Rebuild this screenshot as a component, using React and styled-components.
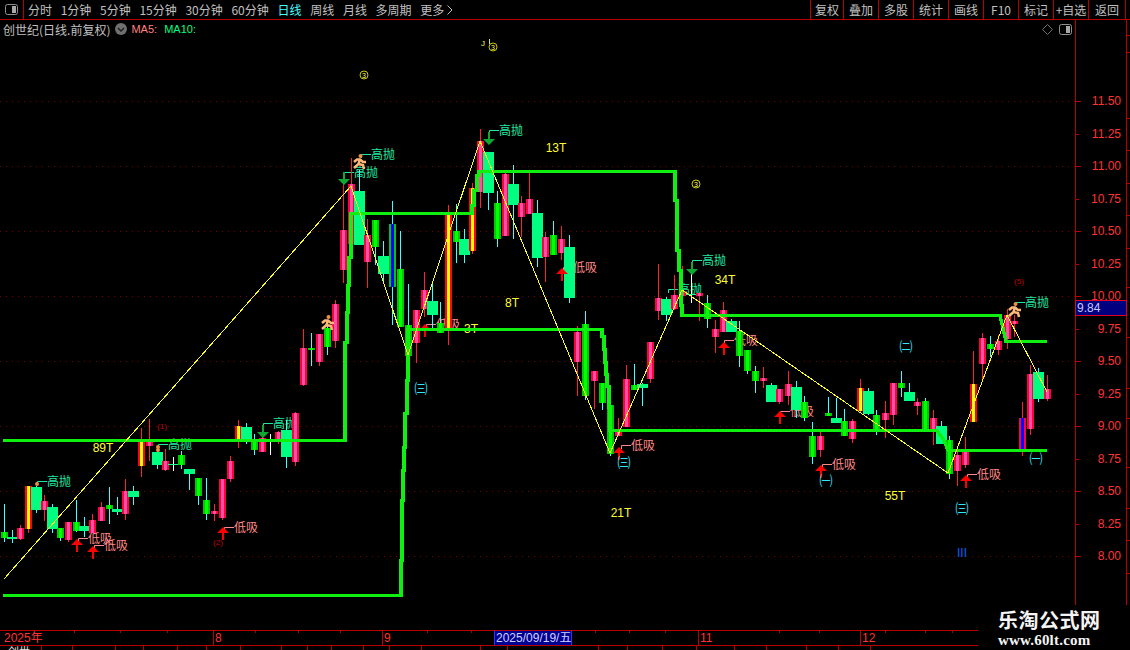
import React from 'react';
import styled, { createGlobalStyle } from 'styled-components';

const LINE_RED = '#b80000';
const CJK = '"Noto Sans CJK SC", "Liberation Sans", sans-serif';

const GlobalStyle = createGlobalStyle`
  html, body { margin: 0; padding: 0; background: #000; }
`;

const Page = styled.div`
  position: relative;
  width: 1130px;
  height: 650px;
  background: #000;
  overflow: hidden;
  display: flex;
  flex-direction: column;
  font-family: ${CJK};
  font-size: 12px;
  color: #c0c0c0;
`;

const Toolbar = styled.div`
  height: 19px;
  flex: none;
  display: flex;
  align-items: center;
  border-bottom: 1px solid ${LINE_RED};
`;

const PanelToggle = styled.div`
  width: 23px;
  height: 19px;
  display: flex;
  align-items: center;
  justify-content: center;
  border-right: 1px solid ${LINE_RED};
`;

const Periods = styled.div`
  display: flex;
  align-items: center;
  gap: 8.7px;
  margin-left: 4px;
`;

const Period = styled.span`
  display: flex;
  align-items: center;
  gap: 3px;
  line-height: 19px;
  white-space: nowrap;
  color: ${(p) => (p.$active ? '#40ffff' : '#c0c0c0')};
`;

const Actions = styled.div`
  margin-left: auto;
  display: flex;
  height: 19px;
  margin-right: 4px;
  border-right: 1px solid ${LINE_RED};
`;

const ActionButton = styled.div`
  width: ${(p) => p.$w}px;
  box-sizing: border-box;
  border-left: 1px solid ${LINE_RED};
  text-align: center;
  line-height: 19px;
  white-space: nowrap;
  overflow: hidden;
`;

const Main = styled.div`
  flex: none;
  height: 610px;
  display: flex;
`;

const ChartColumn = styled.div`
  width: 1075px;
  display: flex;
  flex-direction: column;
`;

const Legend = styled.div`
  height: 18px;
  flex: none;
  display: flex;
  align-items: center;
  padding-left: 3px;
`;

const StockName = styled.span`
  margin-right: 5px;
  white-space: nowrap;
`;

const MaLabel = styled.span`
  font-family: "Liberation Sans", sans-serif;
  font-size: 11px;
  margin-left: ${(p) => p.$gap}px;
  color: ${(p) => p.$color};
`;

const LegendTools = styled.div`
  margin-left: auto;
  margin-right: 3px;
  display: flex;
  align-items: center;
  gap: 6px;
`;

const ChartSvg = styled.svg`
  display: block;
  flex: none;
`;

const PriceAxisSvg = styled.svg`
  display: block;
  flex: none;
`;

const PriceText = styled.text`
  font-family: "Liberation Sans", sans-serif;
  font-size: 12px;
  fill: #ff3333;
  text-anchor: end;
  dominant-baseline: central;
`;

const LastPriceText = styled.text`
  font-family: "Liberation Sans", sans-serif;
  font-size: 12px;
  fill: #c8c8ff;
  dominant-baseline: central;
`;

const ChartText = styled.text`
  font-family: ${CJK};
  font-size: ${(p) => p.$size || 12}px;
  fill: ${(p) => p.$color};
  dominant-baseline: central;
`;

const LatinText = styled.text`
  font-family: "Liberation Sans", sans-serif;
  font-size: ${(p) => p.$size || 12}px;
  fill: ${(p) => p.$color};
  dominant-baseline: central;
  text-anchor: middle;
`;

const RoundText = styled.text`
  font-family: ${CJK};
  font-size: 13px;
  fill: #30e8ff;
  dominant-baseline: central;
  text-anchor: middle;
`;

const DateAxis = styled.div`
  position: relative;
  flex: none;
  height: 16px;
  display: flex;
  box-sizing: border-box;
  border-top: 1px solid ${LINE_RED};
  border-bottom: 1px solid ${LINE_RED};
  color: #ff3333;
`;

const MonthCell = styled.div`
  width: ${(p) => p.$w}px;
  flex: none;
  box-sizing: border-box;
  padding-left: ${(p) => (p.$first ? 4 : 1)}px;
  border-right: 1px solid ${(p) => (p.$open ? 'transparent' : LINE_RED)};
  line-height: 14px;
  font-family: "Liberation Sans", ${CJK};
  font-size: 12px;
  white-space: nowrap;
`;

const DateTick = styled.i`
  position: absolute;
  top: 0;
  width: 1px;
  height: 2px;
  background: ${LINE_RED};
`;

const DateTag = styled.div`
  position: absolute;
  left: 494px;
  top: 0;
  width: 78px;
  height: 14px;
  box-sizing: border-box;
  background: #000090;
  border-left: 1px solid #3030ff;
  border-right: 1px solid #3030ff;
  color: #d0d0ff;
  line-height: 14px;
  font-family: "Liberation Sans", ${CJK};
  font-size: 12px;
  white-space: nowrap;
  padding-left: 1px;
`;

const StatusStrip = styled.div`
  flex: none;
  height: 4px;
  display: flex;
  overflow: hidden;
`;

const StatusCell = styled.div`
  width: ${(p) => p.$w}px;
  flex: none;
  box-sizing: border-box;
  border-right: 1px solid ${LINE_RED};
  font-size: 11px;
  line-height: 11px;
  color: #e0e0e0;
  padding-left: 8px;
  white-space: nowrap;
  overflow: hidden;
`;

const Watermark = styled.div`
  position: absolute;
  right: 0;
  bottom: 0;
  width: 152px;
  height: 45px;
  background: #000;
  display: flex;
  flex-direction: column;
  padding-left: 20px;
  box-sizing: border-box;
`;

const WatermarkName = styled.div`
  font-family: ${CJK};
  font-weight: 700;
  font-size: 20px;
  line-height: 24px;
  margin-top: 3px;
  letter-spacing: 0.5px;
  color: #f4f4f4;
  white-space: nowrap;
`;

const WatermarkUrl = styled.div`
  font-family: "Liberation Serif", serif;
  font-weight: 700;
  font-size: 15px;
  line-height: 16px;
  letter-spacing: 0.2px;
  color: #f4f4f4;
  white-space: nowrap;
`;

// x, wick top, wick bottom, body top, body bottom, kind
const CANDLES = [
  [4, 504, 542, 532, 538, 'g'], [12, 530, 543, 537, 539, 'm'], [20, 525, 540, 528, 539, 'r'],
  [28, 486, 533, 486, 529, 'y'], [36, 486, 513, 487, 510, 'm'], [44, 495, 521, 501, 510, 'r'],
  [52, 504, 533, 507, 529, 'm'], [60, 528, 541, 528, 538, 'g'], [68, 522, 542, 522, 540, 'r'],
  [76, 500, 532, 522, 531, 'g'], [84, 517, 537, 526, 531, 'm'], [92, 514, 533, 520, 533, 'r'],
  [101, 502, 521, 507, 521, 'r'], [109, 487, 524, 505, 509, 'g'], [117, 497, 515, 509, 512, 'm'],
  [125, 479, 520, 491, 514, 'r'], [133, 486, 505, 491, 497, 'm'], [141, 428, 477, 442, 466, 'y'],
  [149, 419, 461, 442, 446, 'r'], [157, 447, 469, 452, 465, 'm'], [165, 449, 471, 461, 470, 'r'],
  [173, 457, 471, 464, 465, 'w'], [181, 451, 469, 455, 465, 'g'], [189, 469, 490, 469, 474, 'm'],
  [198, 478, 505, 478, 496, 'g'], [206, 478, 520, 500, 514, 'g'], [214, 504, 521, 511, 514, 'r'],
  [222, 479, 520, 479, 518, 'r'], [230, 456, 482, 461, 479, 'r'], [238, 420, 448, 426, 439, 'y'],
  [246, 423, 444, 427, 440, 'm'], [254, 434, 455, 441, 450, 'g'], [262, 428, 452, 438, 452, 'r'],
  [270, 434, 455, 440, 441, 'w'], [278, 431, 444, 432, 440, 'r'], [286, 420, 468, 430, 457, 'm'],
  [295, 412, 466, 413, 462, 'r'], [303, 329, 386, 348, 385, 'r'], [311, 333, 366, 348, 350, 'g'],
  [319, 334, 366, 334, 362, 'r'], [327, 322, 355, 328, 347, 'g'], [335, 300, 348, 304, 341, 'r'],
  [343, 183, 283, 230, 270, 'r'], [351, 158, 253, 184, 244, 'r'], [359, 170, 245, 191, 245, 'm'],
  [367, 219, 288, 235, 262, 'r'], [375, 220, 265, 220, 247, 'g'], [383, 241, 283, 256, 274, 'm'],
  [392, 201, 325, 224, 287, 'bg'], [400, 231, 327, 269, 327, 'g'], [408, 284, 356, 325, 356, 'g'],
  [416, 310, 363, 310, 343, 'r'], [424, 272, 317, 290, 309, 'r'], [432, 281, 328, 301, 315, 'm'],
  [440, 302, 333, 323, 333, 'g'], [448, 205, 345, 215, 329, 'y'], [456, 204, 263, 231, 242, 'g'],
  [464, 229, 263, 239, 255, 'm'], [472, 183, 254, 188, 251, 'y'], [480, 129, 208, 141, 192, 'r'],
  [488, 152, 210, 152, 193, 'm'], [497, 191, 247, 203, 239, 'g'], [505, 170, 236, 174, 236, 'r'],
  [513, 165, 239, 184, 205, 'm'], [521, 196, 237, 203, 217, 'r'], [529, 173, 214, 199, 214, 'r'],
  [537, 200, 267, 213, 258, 'm'], [545, 232, 282, 237, 257, 'r'], [553, 221, 255, 235, 255, 'g'],
  [561, 226, 260, 239, 253, 'r'], [569, 235, 303, 247, 298, 'm'], [577, 326, 396, 332, 362, 'r'],
  [585, 311, 400, 324, 396, 'g'], [594, 371, 409, 371, 381, 'r'], [602, 383, 410, 383, 403, 'g'],
  [610, 405, 456, 405, 454, 'g'], [618, 418, 436, 430, 436, 'r'], [626, 365, 427, 379, 427, 'r'],
  [634, 364, 390, 385, 390, 'g'], [642, 383, 406, 384, 388, 'm'], [650, 342, 383, 342, 379, 'r'],
  [658, 264, 320, 298, 311, 'r'], [666, 297, 321, 299, 315, 'm'], [674, 275, 310, 295, 309, 'r'],
  [682, 266, 310, 291, 296, 'r'], [691, 273, 303, 294, 295, 'w'], [699, 293, 321, 293, 296, 'r'],
  [707, 295, 328, 303, 319, 'g'], [715, 320, 353, 329, 337, 'r'], [723, 302, 332, 310, 332, 'r'],
  [731, 319, 332, 321, 332, 'm'], [739, 321, 367, 331, 356, 'g'], [747, 350, 374, 350, 371, 'g'],
  [755, 366, 393, 371, 381, 'g'], [763, 367, 388, 378, 381, 'r'], [771, 383, 402, 385, 402, 'm'],
  [779, 389, 404, 389, 402, 'r'], [788, 371, 405, 384, 396, 'r'], [796, 381, 418, 387, 410, 'm'],
  [804, 396, 421, 402, 418, 'g'], [812, 422, 464, 436, 457, 'g'], [820, 432, 457, 436, 450, 'r'],
  [828, 397, 416, 413, 416, 'g'], [836, 398, 423, 418, 423, 'm'], [844, 409, 436, 421, 436, 'g'],
  [852, 419, 443, 421, 439, 'r'], [860, 379, 412, 388, 411, 'y'], [868, 388, 415, 391, 414, 'm'],
  [876, 410, 435, 415, 430, 'g'], [885, 401, 438, 413, 420, 'r'], [893, 383, 425, 383, 415, 'r'],
  [901, 371, 397, 383, 388, 'g'], [909, 383, 401, 392, 401, 'm'], [917, 398, 415, 402, 406, 'r'],
  [925, 398, 430, 401, 429, 'g'], [933, 410, 445, 418, 429, 'r'], [941, 421, 444, 426, 444, 'm'],
  [949, 436, 479, 440, 474, 'g'], [957, 449, 486, 455, 471, 'r'], [965, 437, 468, 452, 465, 'r'],
  [973, 351, 422, 384, 422, 'y'], [982, 333, 379, 338, 364, 'r'], [990, 336, 357, 344, 349, 'g'],
  [998, 335, 355, 341, 350, 'r'], [1007, 309, 349, 315, 339, 'r'], [1014, 315, 337, 321, 324, 'r'],
  [1022, 402, 456, 418, 450, 'br'], [1030, 365, 435, 374, 429, 'r'], [1038, 368, 402, 372, 399, 'm'],
  [1047, 375, 401, 389, 399, 'r'],
];

const CANDLE_STYLE = {
  r: { w: 7, wick: '#ff2030', edge: '#ff0040', core: '#ff50a8' },
  y: { w: 7, wick: '#ff2030', edge: '#ff0020', core: '#ffff00' },
  g: { w: 7, wick: '#40ffff', edge: '#00c800', core: '#00ff00' },
  m: { w: 11, wick: '#40ffff', edge: '#00ff80', core: '#00ff80' },
  w: { w: 11, wick: '#ffffff', edge: '#20ff90', core: '#20ff90' },
  bg: { w: 7, wick: '#40ffff', edge: '#00c800', core: '#0000ff' },
  br: { w: 7, wick: '#ff2030', edge: '#ff0040', core: '#0000ff' },
};

const TREND_LINES = [
  '3,440 345,440 345,342 347,342 347,312 348,312 348,285 349,285 349,257 351,257 351,213 472,213 472,205 474,205 474,190 477,190 477,175 479,175 479,171 675,171 675,200 677,200 677,250 679,250 679,270 681,270 681,305 682,305 682,315 1000,315 1006,341 1047,341',
  '3,595 401,595 401,560 402,560 402,500 403,500 403,470 404,470 404,447 405,447 405,413 407,413 407,380 408,380 408,329 602,329 602,336 604,336 604,349 605,349 605,362 606,362 606,374 607,374 607,386 609,386 609,407 610,407 610,430 937,430 944,440 948,450 1047,450',
];
const ZIGZAG = '4,579 351,186 408,355 480,141 610,453 682,290 948,473 1007,315 1047,392';

const SELL_LABELS = [[47, 480], [168, 443], [273, 422], [371, 153], [354, 171], [499, 129], [702, 259], [678, 288], [1025, 301]];
const BUY_LABELS = [[88, 537], [104, 544], [234, 526], [573, 266], [436, 323], [631, 444], [734, 339], [790, 410], [832, 463], [977, 473]];
const UP_ARROWS = [[77, 539], [93, 546], [223, 527], [562, 268], [425, 324], [619, 447], [724, 342], [780, 411], [821, 465], [966, 475]];
const DOWN_ARROWS = [[263, 425], [344, 172], [489, 132], [692, 262]];
const RUNNERS = [[353, 154], [321, 315], [1008, 302]];
const SPARKS = [[37, 484], [158, 447], [158, 450]];
const WAVE_T = [['89T', 103, 448], ['13T', 556, 148], ['8T', 512, 303], ['3T', 471, 329], ['34T', 725, 280], ['21T', 621, 513], ['55T', 895, 496]];
const ROUND_MARKS = [['㈢', 421, 387], ['㈢', 624, 461], ['㈠', 826, 479], ['㈡', 906, 345], ['㈢', 962, 507], ['㈠', 1036, 457]];
const YELLOW_MARKS = [[364, 75], [493, 47], [696, 184]];
const WAVE_NO = [['(1)', 162, 426], ['(2)', 218, 542], ['(5)', 1019, 281]];

const GRID_Y = [101, 166, 231, 296, 361, 426, 491, 556];
const PRICES = [
  ['11.50', 101], ['11.25', 134], ['11.00', 166], ['10.75', 199], ['10.50', 231], ['10.25', 264], ['10.00', 296],
  ['9.75', 329], ['9.50', 361], ['9.25', 394], ['9.00', 426], ['8.75', 459], ['8.50', 491], ['8.25', 524], ['8.00', 556],
];
const SIDE_TICKS = [35, 52, 118, 150, 183, 215, 248, 287, 337, 388, 418, 467, 508, 540, 573];

const PERIODS = ['分时', '1分钟', '5分钟', '15分钟', '30分钟', '60分钟', '日线', '周线', '月线', '多周期', '更多'];
const ACTIONS = [['复权', 33], ['叠加', 35], ['多股', 35], ['统计', 35], ['画线', 35], ['F10', 35], ['标记', 35], ['+自选', 35], ['返回', 37]];
const MONTHS = [['2025年', 214], ['8', 169], ['9', 316], ['11', 162], ['12', 269]];
const DATE_TICKS = [74, 120, 167, 255, 298, 340, 427, 471, 595, 629, 665, 779, 819, 885, 925, 952];
const STATUS_WIDTHS = [42, 31, 43, 28, 34, 29, 34, 41, 26, 24, 32, 26, 32, 59, 27, 91, 29, 35, 34, 38, 32, 40, 32, 32];

const SplitIcon = () => (
  <svg width="13" height="11" viewBox="0 0 13 11">
    <rect x="0.5" y="0.5" width="12" height="10" rx="2" fill="none" stroke="#909090" />
    <rect x="7" y="2" width="4" height="7" fill="#a8a8a8" />
  </svg>
);

const ChevronBadge = () => (
  <svg width="12" height="12" viewBox="0 0 12 12">
    <circle cx="6" cy="6" r="6" fill="#707070" />
    <path d="M3 5 L6 8 L9 5" fill="none" stroke="#1c1c1c" strokeWidth="1.4" />
  </svg>
);

const DiamondIcon = () => (
  <svg width="11" height="11" viewBox="0 0 11 11">
    <path d="M5.5 0.5 L10.5 5.5 L5.5 10.5 L0.5 5.5 Z" fill="none" stroke="#707070" />
  </svg>
);

const MoreChevron = () => (
  <svg width="6" height="10" viewBox="0 0 6 10">
    <path d="M0.5 0.5 L5 5 L0.5 9.5" fill="none" stroke="#c0c0c0" />
  </svg>
);

const Candle = ({ c }) => {
  const [x, wt, wb, bt, bb, kind] = c;
  const s = CANDLE_STYLE[kind];
  const h = Math.max(bb - bt, 1);
  return (
    <g>
      <rect x={x} y={wt} width="1" height={wb - wt} fill={s.wick} />
      <rect x={x - (s.w - 1) / 2} y={bt} width={s.w} height={h} fill={s.edge} />
      {s.w === 7 && <rect x={x - 1} y={bt} width="3" height={h} fill={s.core} />}
    </g>
  );
};

const SignalLabel = ({ x, y, text, color }) => (
  <g>
    <path d={`M${x - 9.5} ${y + 5} V${y + 1.5} H${x}`} fill="none" stroke={color} />
    <ChartText x={x} y={y} $color={color}>{text}</ChartText>
  </g>
);

const UpArrow = ({ x, y }) => (
  <path d={`M${x} ${y} L${x + 6} ${y + 6} H${x + 1} V${y + 13} H${x - 1} V${y + 6} H${x - 6} Z`} fill="#ff0000" />
);

const DownArrow = ({ x, y }) => (
  <path d={`M${x - 1} ${y} H${x + 1} V${y + 7} H${x + 6} L${x} ${y + 13} L${x - 6} ${y + 7} H${x - 1} Z`} fill="#10a830" />
);

const Runner = ({ x, y }) => (
  <g transform={`translate(${x} ${y})`} fill="none" stroke="#ffb878" strokeWidth="2.6">
    <circle cx="7.5" cy="2" r="2" fill="#e89040" stroke="none" />
    <path d="M7 5 L5.5 10 L1 14" />
    <path d="M5.5 10 L10 11 L11 15" />
    <path d="M1 8 L4 5.5 L7 5.5 L10 8 L13 8" />
  </g>
);

const Chart = () => (
  <ChartSvg width="1075" height="592" viewBox="0 38 1075 592">
    {GRID_Y.map((y) => (
      <line key={y} x1="0" x2="1075" y1={y + 0.5} y2={y + 0.5} stroke="#780000" strokeDasharray="1 5" />
    ))}
    {WAVE_T.map(([t, x, y]) => (
      <LatinText key={t} x={x} y={y} $color="#ffff30">{t}</LatinText>
    ))}
    {SELL_LABELS.map(([x, y]) => (
      <SignalLabel key={x} x={x} y={y} text="高抛" color="#20e8a0" />
    ))}
    {BUY_LABELS.map(([x, y]) => (
      <SignalLabel key={x} x={x} y={y} text="低吸" color="#ff8888" />
    ))}
    <g shapeRendering="crispEdges">
      {CANDLES.map((c) => (
        <Candle key={c[0]} c={c} />
      ))}
    </g>
    {UP_ARROWS.map(([x, y]) => (
      <UpArrow key={x} x={x} y={y} />
    ))}
    {DOWN_ARROWS.map(([x, y]) => (
      <DownArrow key={x} x={x} y={y} />
    ))}
    {TREND_LINES.map((points) => (
      <polyline
        key={points}
        points={points}
        fill="none"
        stroke="#10f010"
        strokeWidth="3.4"
        transform="translate(0 0.5)"
        shapeRendering="crispEdges"
      />
    ))}
    <polyline points={ZIGZAG} fill="none" stroke="#ffff20" strokeWidth="1" shapeRendering="crispEdges" />
    {RUNNERS.map(([x, y]) => (
      <Runner key={x} x={x} y={y} />
    ))}
    {SPARKS.map(([x, y]) => (
      <circle key={y} cx={x} cy={y} r="2" fill="#e89040" />
    ))}
    {ROUND_MARKS.map(([t, x, y]) => (
      <RoundText key={x} x={x} y={y}>{t}</RoundText>
    ))}
    {YELLOW_MARKS.map(([x, y]) => (
      <g key={x}>
        <circle cx={x} cy={y} r="4" fill="none" stroke="#c8c800" />
        <LatinText x={x} y={y} $size={7} $color="#ffff60">3</LatinText>
      </g>
    ))}
    <LatinText x={483} y={43} $size={8} $color="#ffff60">J</LatinText>
    <rect x="489" y="39" width="1" height="5" fill="#e0e060" />
    {WAVE_NO.map(([t, x, y]) => (
      <LatinText key={t} x={x} y={y} $size={8} $color="#c00000">{t}</LatinText>
    ))}
    <LatinText x={962} y={553} $color="#0060ff">III</LatinText>
  </ChartSvg>
);

const PriceAxis = () => (
  <PriceAxisSvg width="55" height="610" viewBox="1075 20 55 610">
    <line x1="1075.5" x2="1075.5" y1="20" y2="630" stroke={LINE_RED} />
    <line x1="1126.5" x2="1126.5" y1="20" y2="630" stroke={LINE_RED} />
    {PRICES.map(([t, y], i) => (
      <g key={t}>
        <line x1="1075" x2={i % 2 ? 1079 : 1081} y1={y + 0.5} y2={y + 0.5} stroke={LINE_RED} />
        <PriceText x="1121" y={y}>{t}</PriceText>
      </g>
    ))}
    {SIDE_TICKS.map((y) => (
      <line key={y} x1="1126" x2="1130" y1={y + 0.5} y2={y + 0.5} stroke={LINE_RED} />
    ))}
    <rect x="1075.5" y="300.5" width="51" height="15" fill="#000080" stroke="#e00020" />
    <LastPriceText x="1077" y="308">9.84</LastPriceText>
  </PriceAxisSvg>
);

export default function App() {
  return (
    <>
      <GlobalStyle />
      <Page>
        <Toolbar>
          <PanelToggle>
            <SplitIcon />
          </PanelToggle>
          <Periods>
            {PERIODS.map((p) => (
              <Period key={p} $active={p === '日线'}>
                {p}
                {p === '更多' && <MoreChevron />}
              </Period>
            ))}
          </Periods>
          <Actions>
            {ACTIONS.map(([t, w]) => (
              <ActionButton key={t} $w={w}>{t}</ActionButton>
            ))}
          </Actions>
        </Toolbar>
        <Main>
          <ChartColumn>
            <Legend>
              <StockName>创世纪(日线.前复权)</StockName>
              <ChevronBadge />
              <MaLabel $gap={4} $color="#ff8080">MA5:</MaLabel>
              <MaLabel $gap={7} $color="#00ff80">MA10:</MaLabel>
              <LegendTools>
                <DiamondIcon />
                <SplitIcon />
              </LegendTools>
            </Legend>
            <Chart />
          </ChartColumn>
          <PriceAxis />
        </Main>
        <DateAxis>
          {MONTHS.map(([t, w], i) => (
            <MonthCell key={t} $w={w} $first={i === 0} $open={i === MONTHS.length - 1}>{t}</MonthCell>
          ))}
          {DATE_TICKS.map((x) => (
            <DateTick key={x} style={{ left: x }} />
          ))}
          <DateTag>2025/09/19/五</DateTag>
        </DateAxis>
        <StatusStrip>
          {STATUS_WIDTHS.map((w, i) => (
            <StatusCell key={i} $w={w}>{i === 0 ? '创世' : ''}</StatusCell>
          ))}
        </StatusStrip>
        <Watermark>
          <WatermarkName>乐淘公式网</WatermarkName>
          <WatermarkUrl>www.60lt.com</WatermarkUrl>
        </Watermark>
      </Page>
    </>
  );
}
